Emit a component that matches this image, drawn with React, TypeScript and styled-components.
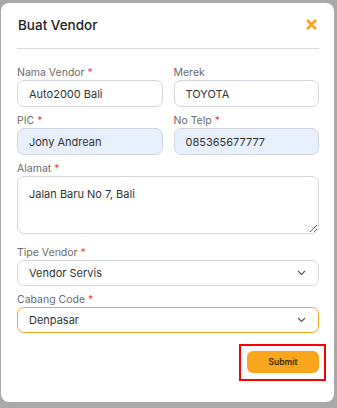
import React from "react";
import styled, { createGlobalStyle } from "styled-components";
import { FaTimes } from "react-icons/fa";

const Global = createGlobalStyle`
  html, body { margin: 0; padding: 0; }
  body {
    background: #a9a9a9;
    font-family: Inter, "Noto Sans", sans-serif;
    width: 337px;
    height: 408px;
    overflow: hidden;
  }
  * { box-sizing: border-box; }
`;

const Page = styled.div`
  padding: 3px 3px 0 1px;
`;

const Modal = styled.div`
  width: 333px;
  height: 399px;
  background: #fff;
  border-radius: 8px;
  display: flex;
  flex-direction: column;
  padding: 0 15px 0 16px;
`;

const Header = styled.div`
  height: 46px;
  display: flex;
  align-items: center;
  justify-content: space-between;
  border-bottom: 1px solid #dcdcdc;
  padding: 0 1px 2px 1px;
`;

const Title = styled.h1`
  margin: 0;
  font-size: 13.5px;
  font-weight: 500;
  color: #222;
`;

const Close = styled.button`
  border: 0;
  background: none;
  padding: 0;
  color: #f9a51f;
  display: flex;
  margin-right: -1px;
`;

const Form = styled.form`
  display: flex;
  flex-direction: column;
  padding-top: 17px;
`;

const Row = styled.div`
  display: grid;
  grid-template-columns: minmax(0, 1fr) minmax(0, 1fr);
  column-gap: 11px;
`;

const Field = styled.div`
  display: flex;
  flex-direction: column;
  margin-bottom: 7px;
  min-width: 0;
`;

const Label = styled.label`
  font-size: 10.5px;
  line-height: 13px;
  color: #6b6b6b;
  margin-bottom: 1px;
  span { color: #ef3b3b; }
`;

const Input = styled.input<{ $filled?: boolean }>`
  width: 100%;
  min-width: 0;
  height: 27px;
  border: 1px solid #d3d6de;
  border-radius: 7px;
  background: ${(p) => (p.$filled ? "#e8f0fe" : "#fff")};
  font-family: inherit;
  font-size: 11px;
  color: #333;
  padding: 0 11px;
  outline: none;
`;

const TextArea = styled.textarea`
  height: 58px;
  border: 1px solid #d3d6de;
  border-radius: 7px;
  background: #fff;
  font-family: inherit;
  font-size: 11px;
  color: #333;
  padding: 10px 11px;
  outline: none;
  resize: vertical;
  margin-bottom: 5px;
`;

const SelectBox = styled.div<{ $active?: boolean }>`
  height: 26px;
  border: 1px solid ${(p) => (p.$active ? "#f9a51f" : "#d3d6de")};
  border-radius: 7px;
  display: flex;
  align-items: center;
  justify-content: space-between;
  padding: 0 12px 0 11px;
  font-size: 11px;
  color: #333;
`;

const Footer = styled.div`
  display: flex;
  justify-content: flex-end;
  padding-top: 4px;
`;

const Highlight = styled.div`
  border: 2.5px solid #ff0000;
  padding: 5px 5px 6px 6px;
  margin-right: -7px;
`;

const Submit = styled.button`
  width: 72px;
  height: 22px;
  border: 0;
  border-radius: 6px;
  background: #f9a61c;
  font-family: inherit;
  font-size: 8.5px;
  font-weight: 600;
  color: #3a2a10;
  display: block;
`;

const Chevron = () => (
  <svg width="9" height="6" viewBox="0 0 9 6" fill="none">
    <path d="M1 1l3.5 3.5L8 1" stroke="#555" strokeWidth="1.1" />
  </svg>
);

export default function App() {
  return (
    <Page>
      <Global />
      <Modal>
        <Header>
          <Title>Buat Vendor</Title>
          <Close type="button" aria-label="close">
            <FaTimes size={15} />
          </Close>
        </Header>
        <Form>
          <Row>
            <Field>
              <Label>
                Nama Vendor <span>*</span>
              </Label>
              <Input defaultValue="Auto2000 Bali" />
            </Field>
            <Field>
              <Label>Merek</Label>
              <Input defaultValue="TOYOTA" />
            </Field>
          </Row>
          <Row>
            <Field>
              <Label>
                PIC <span>*</span>
              </Label>
              <Input $filled defaultValue="Jony Andrean" />
            </Field>
            <Field>
              <Label>
                No Telp <span>*</span>
              </Label>
              <Input $filled defaultValue="085365677777" />
            </Field>
          </Row>
          <Field>
            <Label>
              Alamat <span>*</span>
            </Label>
            <TextArea defaultValue="Jalan Baru No 7, Bali" spellCheck={false} />
          </Field>
          <Field>
            <Label>
              Tipe Vendor <span>*</span>
            </Label>
            <SelectBox>
              Vendor Servis
              <Chevron />
            </SelectBox>
          </Field>
          <Field>
            <Label>
              Cabang Code <span>*</span>
            </Label>
            <SelectBox $active>
              Denpasar
              <Chevron />
            </SelectBox>
          </Field>
          <Footer>
            <Highlight>
              <Submit type="button">Submit</Submit>
            </Highlight>
          </Footer>
        </Form>
      </Modal>
    </Page>
  );
}
